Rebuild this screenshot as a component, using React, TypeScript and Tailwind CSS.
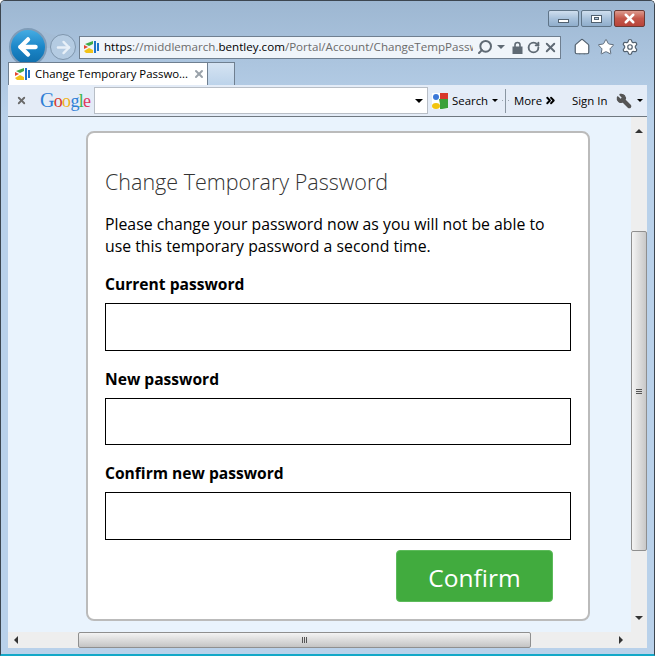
import { ArrowLeft, ArrowRight, ChevronsRight, Home, RotateCw, Search, Settings, Star, Wrench, X } from 'lucide-react';

const uiFont = "font-['Open_Sans','Noto_Sans',sans-serif]";

function Favicon() {
  return (
    <svg width="15" height="12" viewBox="0 0 15 12" className="shrink-0">
      <path d="M1 3 L9 0 L9 3 L5 5 Z" fill="#3fa84a" />
      <path d="M0 4 L4 6 L0 8 Z" fill="#e4472f" />
      <path d="M0 10 L5 7 L9 9 L9 12 L2 12 Z" fill="#f2c318" />
      <rect x="10" y="0" width="2" height="12" fill="#1f74c8" />
      <rect x="13" y="2" width="2" height="8" fill="#1f74c8" />
    </svg>
  );
}

function WindowButton({ kind }: { kind: 'min' | 'max' | 'close' }) {
  if (kind === 'close') {
    return (
      <div className="w-[31px] h-[17px] flex items-center justify-center rounded-[2px] border border-[#6b3a34] bg-gradient-to-b from-[#dc9a8e] via-[#c4574a] to-[#b8433a]">
        <X className="w-[15px] h-[15px] text-white" strokeWidth={4} />
      </div>
    );
  }
  return (
    <div className="w-[31px] h-[17px] flex items-center justify-center rounded-[2px] border border-[#5f7488] bg-gradient-to-b from-[#cfdeee] via-[#a9c2dc] to-[#8fadcb]">
      {kind === 'min' ? (
        <div className="w-[11px] h-[4px] mt-[4px] bg-white border border-[#50606f]" />
      ) : (
        <div className="w-[11px] h-[8px] bg-white border border-[#50606f] flex items-center justify-center">
          <div className="w-[5px] h-[3px] bg-[#b6c8da] border border-[#50606f]" />
        </div>
      )}
    </div>
  );
}

function Field({ label }: { label: string }) {
  return (
    <div>
      <label className="block text-[15.6px] font-bold leading-[24px] text-black">{label}</label>
      <input type="password" className="block w-full h-[47.5px] mt-[7px] border border-black bg-white outline-none" />
    </div>
  );
}

export default function App() {
  return (
    <div className={`w-[655px] h-[656px] relative overflow-hidden bg-[#b9d1ea] flex flex-col border-x border-t border-b-2 border-x-[#3c4650] border-t-[#3c4650] border-b-[#13a8c8] rounded-t-[5px] ${uiFont}`}>
      {/* window chrome */}
      <div className="h-[116px] shrink-0 flex flex-col bg-gradient-to-b from-[#9db7d2] to-[#b9d1ea]">
        <div className="h-[34px] flex justify-end gap-[2px] pt-[9px] pr-[9px]">
          <WindowButton kind="min" />
          <WindowButton kind="max" />
          <WindowButton kind="close" />
        </div>

        <div className="h-[24px] flex items-center pl-[8px]">
          <div className="relative w-[38px] h-[38px] z-10 rounded-full border-2 border-[#7f9cb8] bg-gradient-to-b from-[#45ace2] via-[#1b87c9] to-[#0f6dab] flex items-center justify-center">
            <ArrowLeft className="w-[26px] h-[26px] text-white" strokeWidth={4} />
          </div>
          {/* swoosh joining back and forward buttons */}
          <svg width="30" height="20" viewBox="0 0 30 20" className="absolute left-[30px] top-[27px]">
            <path d="M0 1 C12 1 16 6 30 9 L30 20 L0 20 Z" fill="#a4bcd5" />
          </svg>
          <div className="relative z-10 ml-[3px] w-[26px] h-[26px] rounded-full border border-[#7f96ad] bg-[#b4cbe2] flex items-center justify-center">
            <ArrowRight className="w-[19px] h-[19px] text-[#e8f0f8]" strokeWidth={3} />
          </div>
          <div className="relative z-10 ml-[3px] w-[482px] h-[23px] flex items-center border border-[#6f7f90] bg-[#f0f5fa] pl-[4px]">
            <Favicon />
            <div className="ml-[5px] w-[369px] shrink-0 overflow-hidden whitespace-nowrap text-[11.6px] leading-[20px] text-[#6b6b6b]">
              <span className="text-black">https</span>://middlemarch.<span className="text-black">bentley.com</span>/Portal/Account/ChangeTempPassw
            </div>
            <Search className="w-[16px] h-[16px] ml-[4px] shrink-0 text-[#5f6a74] -scale-x-100" strokeWidth={3} />
            <div className="ml-[4px] shrink-0 w-0 h-0 border-x-[4px] border-x-transparent border-t-[4px] border-t-[#5f6a74]" />
            <svg width="11" height="13" viewBox="0 0 11 13" className="ml-[7px] shrink-0">
              <path d="M3 6 V4 a2.5 2.5 0 0 1 5 0 V6" fill="none" stroke="#5f6a74" strokeWidth="1.6" />
              <rect x="0.5" y="5.5" width="10" height="7.5" fill="#5f6a74" />
            </svg>
            <RotateCw className="w-[13px] h-[13px] ml-[4px] shrink-0 text-[#5f6a74]" strokeWidth={3.5} />
            <X className="w-[15px] h-[15px] ml-[3px] shrink-0 text-[#5f6a74]" strokeWidth={3} />
          </div>
          <div className="ml-[12px] flex items-center gap-[6px]">
            <Home className="w-[18px] h-[18px] text-[#52606e] fill-white" strokeWidth={1.6} />
            <Star className="w-[18px] h-[18px] text-[#52606e] fill-white" strokeWidth={1.2} />
            <Settings className="w-[18px] h-[18px] text-[#52606e] fill-white" strokeWidth={1.6} />
          </div>
        </div>

        <div className="relative z-20 h-[23px] mt-[3px] flex pl-[7px]">
          <div className="w-[200px] flex items-center bg-white border border-b-0 border-[#6f7f90] pl-[6px]">
            <Favicon />
            <span className="ml-[5px] text-[11.4px] text-black whitespace-nowrap">Change Temporary Passwo...</span>
            <X className="w-[12px] h-[12px] ml-[5px] shrink-0 text-[#9aa2aa]" strokeWidth={4} />
          </div>
          <div className="w-[27px] border border-l-0 border-b-0 border-[#6f7f90] bg-gradient-to-b from-[#d5e3f2] to-[#bcd3ea]" />
        </div>

        <div className="h-[32px] mx-[7px] flex items-center bg-[#e4ecf7] border-b border-[#6f7880]">
          <X className="w-[11px] h-[11px] ml-[8px] shrink-0 text-[#6a6a6a]" strokeWidth={4} />
          <span className="ml-[13px] w-[50px] shrink-0 font-['Liberation_Serif',serif] text-[18px] leading-[22px] tracking-[-0.7px]">
            <span className="text-[#2f7fd6] text-[20px]">G</span>
            <span className="text-[#d8382b]">o</span>
            <span className="text-[#f0b320]">o</span>
            <span className="text-[#2f7fd6]">g</span>
            <span className="text-[#3db54a]">l</span>
            <span className="text-[#e0365f]">e</span>
          </span>
          <div className="ml-[4px] w-[334px] h-[27px] shrink-0 flex items-center justify-end bg-white border border-[#b8bec6] pr-[4px]">
            <div className="w-0 h-0 border-x-[4px] border-x-transparent border-t-[4px] border-t-black" />
          </div>
          <svg width="16" height="16" viewBox="0 0 16 16" className="ml-[4px] shrink-0">
            <rect width="16" height="16" rx="1" fill="#fff" />
            <path d="M8 0 H16 V6 H8 Z" fill="#d8382b" />
            <path d="M7 6 H16 V15 L10 16 H8 V11 Z" fill="#3aa13a" />
            <circle cx="4" cy="4" r="3" fill="#3a78d8" />
            <ellipse cx="4" cy="13" rx="4" ry="3" fill="#f2c40f" />
          </svg>
          <span className="ml-[4px] w-[36px] shrink-0 text-[11.4px] text-black">Search</span>
          <div className="ml-[4px] shrink-0 w-0 h-0 border-x-[3px] border-x-transparent border-t-[3px] border-t-black" />
          <div className="ml-[4px] shrink-0 w-px h-px bg-[#9aa4ae]" />
          <div className="ml-[2px] shrink-0 h-[24px] border-l border-[#8a96a2]" />
          <div className="ml-[2px] shrink-0 w-px h-px bg-[#9aa4ae]" />
          <span className="ml-[5px] w-[28px] shrink-0 text-[11.4px] text-black">More</span>
          <ChevronsRight className="w-[13px] h-[13px] ml-[2px] shrink-0 text-black" strokeWidth={3.5} />
          <span className="ml-[15px] w-[36px] shrink-0 text-[11.4px] text-black">Sign In</span>
          <Wrench className="w-[16px] h-[16px] ml-[8px] shrink-0 text-[#555] fill-[#555] -scale-x-100" />
          <div className="ml-[5px] shrink-0 w-0 h-0 border-x-[3px] border-x-transparent border-t-[3px] border-t-black" />
        </div>
      </div>

      {/* page area */}
      <div className="flex-1 min-h-0 mx-[7px] flex flex-col">
        <div className="flex-1 min-h-0 flex">
          <div className="flex-1 bg-[#e9f3fd] pt-[14px] pl-[78px]">
            <div className="w-[504px] h-[490px] bg-white border-2 border-[#bbbbbb] rounded-[8px] px-[17px] pt-[34px] text-black">
              <h1 className="text-[21.5px] font-light leading-[30px] text-[#333]">Change Temporary Password</h1>
              <p className="mt-[16px] w-[466px] text-[15.8px] leading-[22px]">
                Please change your password now as you will not be able to use this temporary password a second time.
              </p>
              <div className="mt-[15px] flex flex-col gap-[16px]">
                <Field label="Current password" />
                <Field label="New password" />
                <Field label="Confirm new password" />
              </div>
              <div className="mt-[10.5px] flex justify-end pr-[18px]">
                <button className="w-[157px] h-[52px] pt-[5px] rounded-[4px] bg-[#41ab3e] border border-[#5dbb5b] text-white text-[24.5px] leading-none">
                  Confirm
                </button>
              </div>
            </div>
          </div>
          <div className="w-[16px] shrink-0 bg-[#eeeeee] flex flex-col items-center">
            <div className="h-[114px] w-full flex justify-center pt-[12px]">
              <div className="w-0 h-0 border-x-[4px] border-x-transparent border-b-[4px] border-b-[#333]" />
            </div>
            <div className="w-full h-[320px] rounded-[2px] border border-[#8f8f8f] bg-gradient-to-r from-[#f4f4f4] to-[#c8c8c8] flex flex-col items-center justify-center gap-[1px]">
              <div className="w-[6px] h-px bg-[#555]" />
              <div className="w-[6px] h-px bg-[#555]" />
              <div className="w-[6px] h-px bg-[#555]" />
            </div>
            <div className="flex-1 w-full flex justify-center items-end pb-[12px]">
              <div className="w-0 h-0 border-x-[4px] border-x-transparent border-t-[4px] border-t-[#333]" />
            </div>
          </div>
        </div>
        <div className="h-[16px] shrink-0 flex items-center bg-[#eeeeee]">
          <div className="w-[70px] flex pl-[6px]">
            <div className="w-0 h-0 border-y-[4px] border-y-transparent border-r-[4px] border-r-[#333]" />
          </div>
          <div className="w-[453px] h-full rounded-[2px] border border-[#8f8f8f] bg-gradient-to-b from-[#f4f4f4] to-[#c4c4c4] flex items-center justify-center gap-[1px]">
            <div className="w-px h-[6px] bg-[#555]" />
            <div className="w-px h-[6px] bg-[#555]" />
            <div className="w-px h-[6px] bg-[#555]" />
          </div>
          <div className="flex-1 flex justify-end pr-[24px]">
            <div className="w-0 h-0 border-y-[4px] border-y-transparent border-l-[4px] border-l-[#333]" />
          </div>
        </div>
      </div>
      <div className="h-[6px] shrink-0" />
    </div>
  );
}
